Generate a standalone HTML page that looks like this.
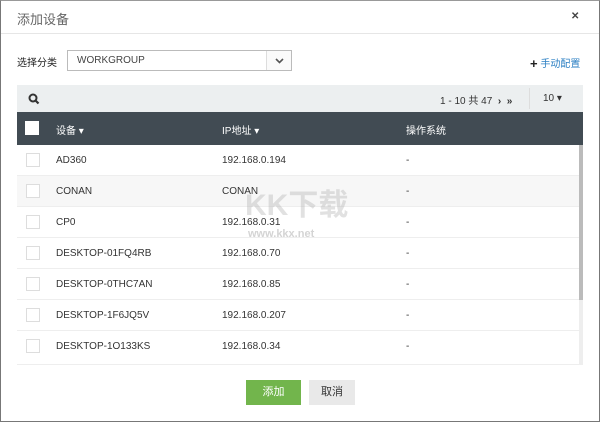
<!DOCTYPE html>
<html><head><meta charset="utf-8"><style>
*{margin:0;padding:0;box-sizing:border-box}
body{width:600px;height:422px;background:#fff;font-family:"Liberation Sans","Noto Sans CJK SC",sans-serif;font-size:10px;color:#333;position:relative;overflow:hidden}
.frame{position:absolute;left:0;top:0;width:600px;height:422px;border:1px solid #777;border-top-color:#999}
.title{position:absolute;left:17px;top:9px;font-size:13px;color:#666}
.close{position:absolute;left:571px;top:11px;font-size:10px;font-weight:bold;color:#444}
.hr{position:absolute;left:1px;right:1px;top:33px;height:1px;background:#e6e6e6}
.lbl{position:absolute;left:17px;top:54px;font-size:10px;color:#222}
.sel{position:absolute;left:67px;top:50px;width:225px;height:21px;border:1px solid #bbb;background:#fff}
.sel span{position:absolute;left:9px;top:4px;font-size:10px;color:#444}
.sel i{position:absolute;right:0;top:0;width:25px;height:19px;border-left:1px solid #ddd;background:#fafafa}
.manual{position:absolute;left:530px;top:55px;font-size:10px;color:#2b7fc3}
.manual b{color:#222;font-size:13px;position:relative;top:1px}
.tool{position:absolute;left:17px;top:85px;width:566px;height:27px;background:#eceff0}
.pg{position:absolute;left:440px;top:92px;font-size:10px;color:#333}
.thead{position:absolute;left:17px;top:112px;width:566px;height:33px;background:#414b53;color:#fff}
.thead div{position:absolute;top:10px;font-size:10px}
.row{position:absolute;left:17px;width:562px;height:31px;border-bottom:1px solid #eee;font-size:10px;color:#333}
.row div{position:absolute;top:10px}
.cb{position:absolute;left:9px;top:8px;width:14px;height:14px;border:1px solid #ddd;background:#fff}
.sb{position:absolute;left:579px;top:145px;width:4px;height:220px;background:#eee}
.sb i{position:absolute;left:0;top:0;width:4px;height:155px;background:#bbb}
.btn{position:absolute;top:380px;height:25px;font-size:11px;text-align:center;line-height:25px}
</style></head><body>
<div class="frame"></div>
<div class="title">添加设备</div>
<div class="close">✕</div>
<div class="hr"></div>
<div class="lbl">选择分类</div>
<div class="sel"><span>WORKGROUP</span><i><svg width="25" height="19"><path d="M9 8l3.5 3.5L16 8" stroke="#555" stroke-width="1.6" fill="none"/></svg></i></div>
<div class="manual"><b>+</b> 手动配置</div>
<div class="tool"><svg style="position:absolute;left:11px;top:8px" width="12" height="12"><circle cx="5" cy="5" r="3.5" stroke="#333" stroke-width="2" fill="none"/><path d="M7.5 7.5l3 3" stroke="#333" stroke-width="2.2"/></svg>
<div style="position:absolute;left:512px;top:3px;width:1px;height:21px;background:#ddd"></div></div>
<div class="pg">1 - 10 共 47 &nbsp;<b>›</b> &nbsp;<b>»</b></div>
<div style="position:absolute;left:543px;top:93px;font-size:10px">10 ▾</div>
<div class="thead">
<div style="left:8px;top:9px;width:14px;height:14px;background:#fff"></div>
<div style="left:39px">设备 ▾</div>
<div style="left:205px">IP地址 ▾</div>
<div style="left:389px">操作系统</div>
</div>
<div class="row" style="top:145px"><span class="cb"></span><div style="left:39px">AD360</div><div style="left:205px">192.168.0.194</div><div style="left:389px">-</div></div>
<div class="row" style="top:176px;background:#f7f7f7"><span class="cb"></span><div style="left:39px">CONAN</div><div style="left:205px">CONAN</div><div style="left:389px">-</div></div>
<div class="row" style="top:207px"><span class="cb"></span><div style="left:39px">CP0</div><div style="left:205px">192.168.0.31</div><div style="left:389px">-</div></div>
<div class="row" style="top:238px"><span class="cb"></span><div style="left:39px">DESKTOP-01FQ4RB</div><div style="left:205px">192.168.0.70</div><div style="left:389px">-</div></div>
<div class="row" style="top:269px"><span class="cb"></span><div style="left:39px">DESKTOP-0THC7AN</div><div style="left:205px">192.168.0.85</div><div style="left:389px">-</div></div>
<div class="row" style="top:300px"><span class="cb"></span><div style="left:39px">DESKTOP-1F6JQ5V</div><div style="left:205px">192.168.0.207</div><div style="left:389px">-</div></div>
<div class="row" style="top:331px;height:34px"><span class="cb"></span><div style="left:39px">DESKTOP-1O133KS</div><div style="left:205px">192.168.0.34</div><div style="left:389px">-</div></div>
<div class="sb"><i></i></div>
<div style="position:absolute;left:245px;top:180px;font-size:30px;font-weight:bold;color:rgba(170,170,170,.35)">KK下载</div>
<div style="position:absolute;left:248px;top:228px;font-size:11px;font-weight:bold;color:rgba(160,160,160,.45)">www.kkx.net</div>
<div class="btn" style="left:246px;width:55px;background:#72b54c;color:#fff">添加</div>
<div class="btn" style="left:309px;width:46px;background:#e9e9e9;color:#333">取消</div>
</body></html>
